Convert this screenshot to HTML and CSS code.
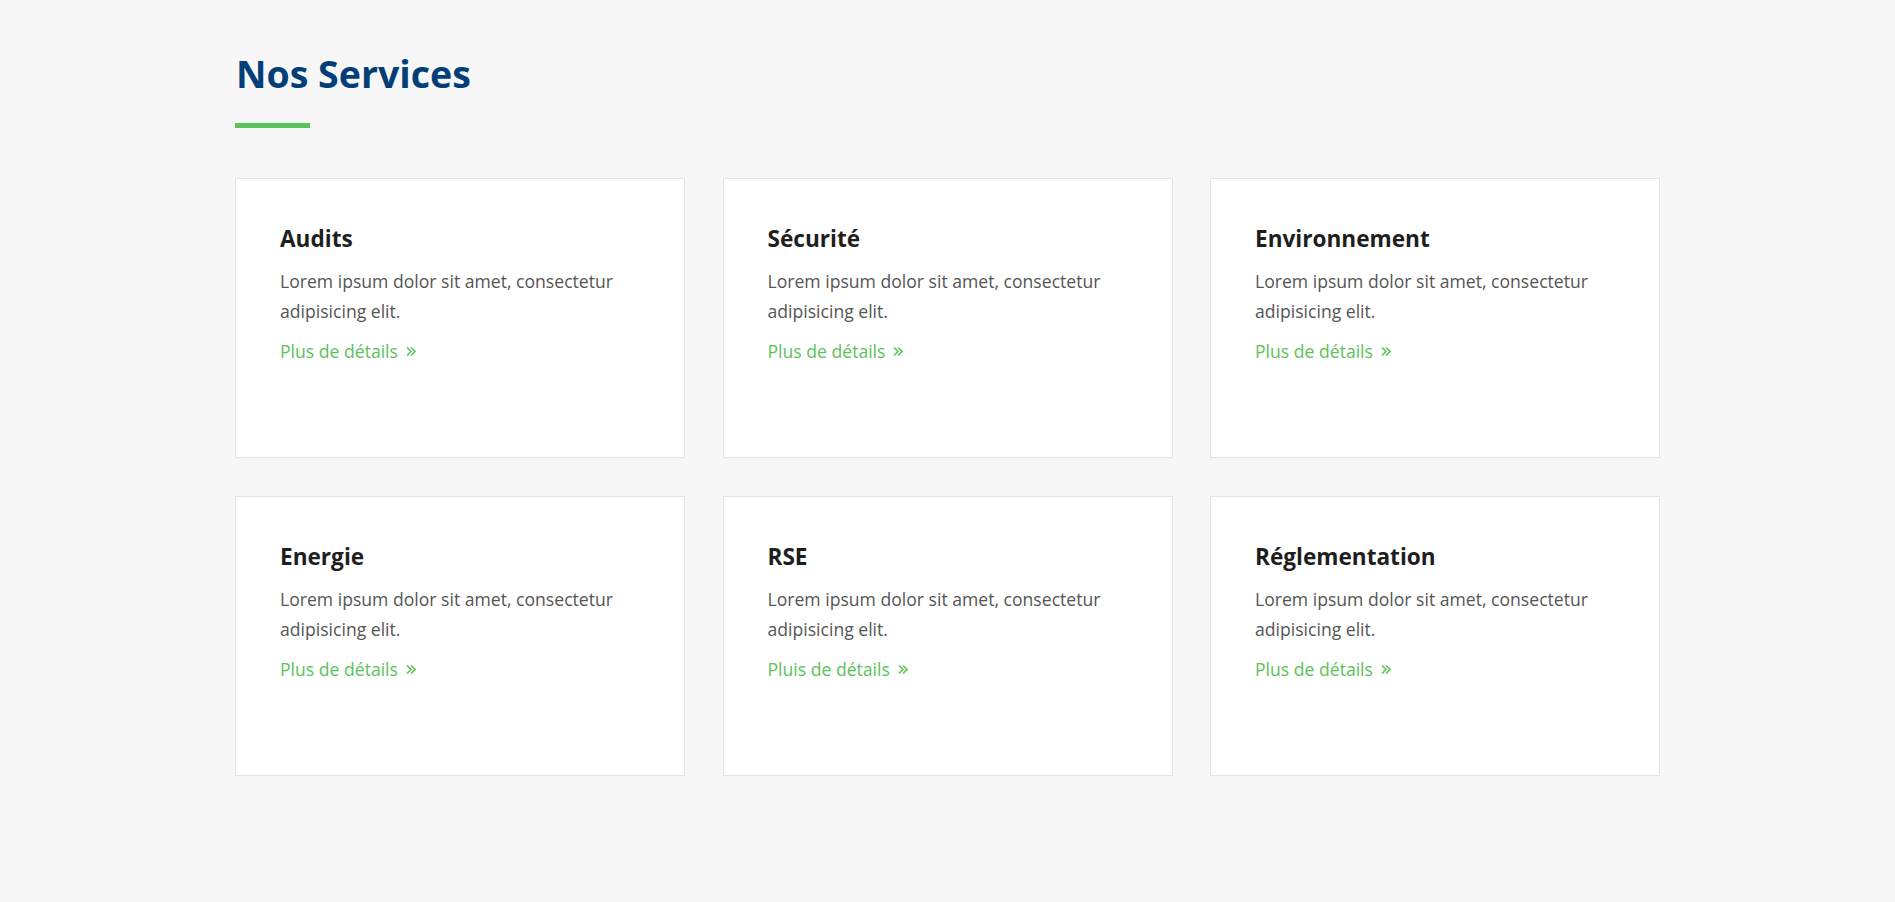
FILE: index.html
```html
<!DOCTYPE html>
<html lang="fr">
<head>
<meta charset="utf-8">
<title>Nos Services</title>
<link rel="stylesheet" href="styles.css">
</head>
<body>
<section class="services">
  <div class="container">
    <h2 class="section-title">Nos Services</h2>
    <div class="title-bar"></div>
    <div class="grid">
      <div class="card">
        <h3 class="card-title">Audits</h3>
        <p class="card-text">Lorem ipsum dolor sit amet, consectetur adipisicing elit.</p>
        <a class="card-link" href="#">Plus de détails <svg class="chev" viewBox="0 0 10 11" width="10" height="11"><path d="M1 1.5 L5 5.5 L1 9.5 M5 1.5 L9 5.5 L5 9.5" fill="none" stroke="currentColor" stroke-width="1.6"/></svg></a>
      </div>
      <div class="card">
        <h3 class="card-title">Sécurité</h3>
        <p class="card-text">Lorem ipsum dolor sit amet, consectetur adipisicing elit.</p>
        <a class="card-link" href="#">Plus de détails <svg class="chev" viewBox="0 0 10 11" width="10" height="11"><path d="M1 1.5 L5 5.5 L1 9.5 M5 1.5 L9 5.5 L5 9.5" fill="none" stroke="currentColor" stroke-width="1.6"/></svg></a>
      </div>
      <div class="card">
        <h3 class="card-title">Environnement</h3>
        <p class="card-text">Lorem ipsum dolor sit amet, consectetur adipisicing elit.</p>
        <a class="card-link" href="#">Plus de détails <svg class="chev" viewBox="0 0 10 11" width="10" height="11"><path d="M1 1.5 L5 5.5 L1 9.5 M5 1.5 L9 5.5 L5 9.5" fill="none" stroke="currentColor" stroke-width="1.6"/></svg></a>
      </div>
      <div class="card">
        <h3 class="card-title">Energie</h3>
        <p class="card-text">Lorem ipsum dolor sit amet, consectetur adipisicing elit.</p>
        <a class="card-link" href="#">Plus de détails <svg class="chev" viewBox="0 0 10 11" width="10" height="11"><path d="M1 1.5 L5 5.5 L1 9.5 M5 1.5 L9 5.5 L5 9.5" fill="none" stroke="currentColor" stroke-width="1.6"/></svg></a>
      </div>
      <div class="card">
        <h3 class="card-title">RSE</h3>
        <p class="card-text">Lorem ipsum dolor sit amet, consectetur adipisicing elit.</p>
        <a class="card-link" href="#">Pluis de détails <svg class="chev" viewBox="0 0 10 11" width="10" height="11"><path d="M1 1.5 L5 5.5 L1 9.5 M5 1.5 L9 5.5 L5 9.5" fill="none" stroke="currentColor" stroke-width="1.6"/></svg></a>
      </div>
      <div class="card">
        <h3 class="card-title">Réglementation</h3>
        <p class="card-text">Lorem ipsum dolor sit amet, consectetur adipisicing elit.</p>
        <a class="card-link" href="#">Plus de détails <svg class="chev" viewBox="0 0 10 11" width="10" height="11"><path d="M1 1.5 L5 5.5 L1 9.5 M5 1.5 L9 5.5 L5 9.5" fill="none" stroke="currentColor" stroke-width="1.6"/></svg></a>
      </div>
    </div>
  </div>
</section>
</body>
</html>
```

FILE: styles.css
```css
* { box-sizing: border-box; }
html, body { margin: 0; padding: 0; }
body {
  background: #f7f7f7;
  font-family: "Open Sans", "Noto Sans", sans-serif;
  min-height: 902px;
}
.services { padding: 52px 0 80px; }
.container {
  width: 1425px;
  margin: 0 auto;
}
.section-title {
  margin: 0;
  font-size: 37.5px;
  line-height: 44px;
  font-weight: 700;
  color: #023f78;
  padding-left: 1px;
}
.title-bar {
  width: 75px;
  height: 5px;
  background: #5cc25a;
  margin-top: 27px;
}
.grid {
  display: grid;
  grid-template-columns: repeat(3, 1fr);
  gap: 38px 37.5px;
  margin-top: 50px;
}
.card {
  background: #fff;
  border: 1px solid #e4e4e4;
  height: 280px;
  padding: 46px 44px 44px;
}
.card-title {
  margin: 0;
  font-size: 22.6px;
  line-height: 28px;
  font-weight: 700;
  color: #1e1e1e;
}
.card-text {
  margin: 13px 0 0;
  font-size: 17.6px;
  line-height: 30px;
  color: #555;
}
.card-link {
  display: inline-flex;
  align-items: center;
  gap: 8px;
  margin-top: 10px;
  font-size: 17.6px;
  line-height: 30px;
  color: #5cc25a;
  text-decoration: none;
}
.chev { display: block; margin-top: 1px; }
```
